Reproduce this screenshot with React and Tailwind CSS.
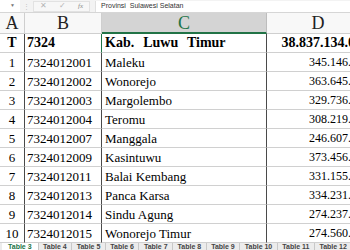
import React from "react";

const rows = [
  ["1", "7324012001", "Maleku", "345.146.000"],
  ["2", "7324012002", "Wonorejo", "363.645.000"],
  ["3", "7324012003", "Margolembo", "329.736.000"],
  ["4", "7324012004", "Teromu", "308.219.000"],
  ["5", "7324012007", "Manggala", "246.607.000"],
  ["6", "7324012009", "Kasintuwu", "373.456.000"],
  ["7", "7324012011", "Balai Kembang", "331.155.000"],
  ["8", "7324012013", "Panca Karsa", "334.231.000"],
  ["9", "7324012014", "Sindu Agung", "274.237.000"],
  ["10", "7324012015", "Wonorejo Timur", "274.560.000"],
];

const tabs = ["Table 4", "Table 5", "Table 6", "Table 7", "Table 8", "Table 9", "Table 10", "Table 11", "Table 12"];

const serif = { fontFamily: '"Liberation Serif", "Times New Roman", serif' };

export default function App() {
  return (
    <div className="w-[350px] h-[250px] overflow-hidden bg-white flex flex-col" style={serif}>
      {/* formula bar */}
      <div className="h-[13px] shrink-0 bg-[#f3f3f3] flex items-center border-b border-[#d6d6d6] font-['Liberation_Sans',sans-serif]">
        <div className="w-[20px] h-full bg-white flex items-center justify-end pr-[5px] text-[5px] text-[#777]">▼</div>
        <div className="w-[13px] flex justify-center text-[7px] leading-none text-[#c4c4c4]">⋮</div>
        <div className="w-[57px] h-[11px] bg-[#f7f7f7] border border-[#e2e2e2] flex items-center text-[#b5b5b5]">
          <span className="w-[19px] text-center text-[8px] leading-none">✕</span>
          <span className="w-[19px] text-center text-[8px] leading-none">✓</span>
          <span className="w-[17px] text-center text-[7px] leading-none italic text-[#8a8a8a]" style={serif}>fx</span>
        </div>
        <div className="ml-[5px] flex-1 h-[11px] bg-white border-l border-[#e0e0e0] flex items-center pl-[5px] text-[7px] text-[#333] whitespace-pre">
          Provinsi  Sulawesi Selatan
        </div>
      </div>

      {/* column headers */}
      <div className="grid grid-cols-[25px_77px_165px_106px] h-[21px] shrink-0 bg-[#f8f8f8] text-[18px] text-[#222] leading-none">
        <div className="flex items-center justify-center border-r border-b border-[#cfcfcf]">A</div>
        <div className="flex items-center justify-center border-r border-b border-[#cfcfcf]">B</div>
        <div className="flex items-center justify-center bg-[#d4d4d4] text-[#217346] border-r border-[#bdbdbd] border-b-2 border-b-[#217346]">C</div>
        <div className="flex items-center justify-center border-b border-[#cfcfcf] pr-[4px]">D</div>
      </div>

      {/* header data row */}
      <div className="grid grid-cols-[25px_77px_165px_106px] h-[19px] shrink-0 text-[14px] text-black font-bold leading-none">
        <div className="flex items-center justify-center border-r border-b border-r-[#4a4a4a] border-b-[#d0d0d0]">T</div>
        <div className="flex items-center pl-[2px] border-r border-b border-r-[#217346] border-b-[#d0d0d0]">7324</div>
        <div className="flex items-center pl-[3px] border-r border-b border-r-[#4a4a4a] border-b-[#d0d0d0] whitespace-pre [word-spacing:1px]">Kab.  Luwu  Timur</div>
        <div className="flex items-center justify-end pr-[4px] border-b border-[#d0d0d0] whitespace-nowrap">38.837.134.000</div>
      </div>

      {rows.map((r) => (
        <div key={r[0]} className="grid grid-cols-[25px_77px_165px_106px] h-[19px] shrink-0 text-[13px] text-black leading-none">
          <div className="flex items-center justify-center border-r border-b border-r-[#4a4a4a] border-b-[#d0d0d0]">{r[0]}</div>
          <div className="flex items-center pl-[2px] border-r border-b border-r-[#4a4a4a] border-b-[#d0d0d0]">{r[1]}</div>
          <div className="flex items-center pl-[3px] border-r border-b border-r-[#4a4a4a] border-b-[#d0d0d0] whitespace-nowrap">{r[2]}</div>
          <div className="flex items-center justify-end pr-[4px] border-b border-[#d0d0d0] text-[12px] whitespace-nowrap">{r[3]}</div>
        </div>
      ))}

      {/* sheet tabs */}
      <div className="flex-1 bg-[#ececec] flex items-start pl-[2px] overflow-hidden font-['Liberation_Sans',sans-serif] text-[7px] font-bold leading-[8px]">
        <div className="px-[6px] bg-white text-[#217346] border-r border-[#c8c8c8] h-full whitespace-nowrap shrink-0">Table 3</div>
        {tabs.map((t) => (
          <div key={t} className="px-[4.5px] text-[#444] border-r border-[#c8c8c8] h-full whitespace-nowrap shrink-0">{t}</div>
        ))}
      </div>
    </div>
  );
}
